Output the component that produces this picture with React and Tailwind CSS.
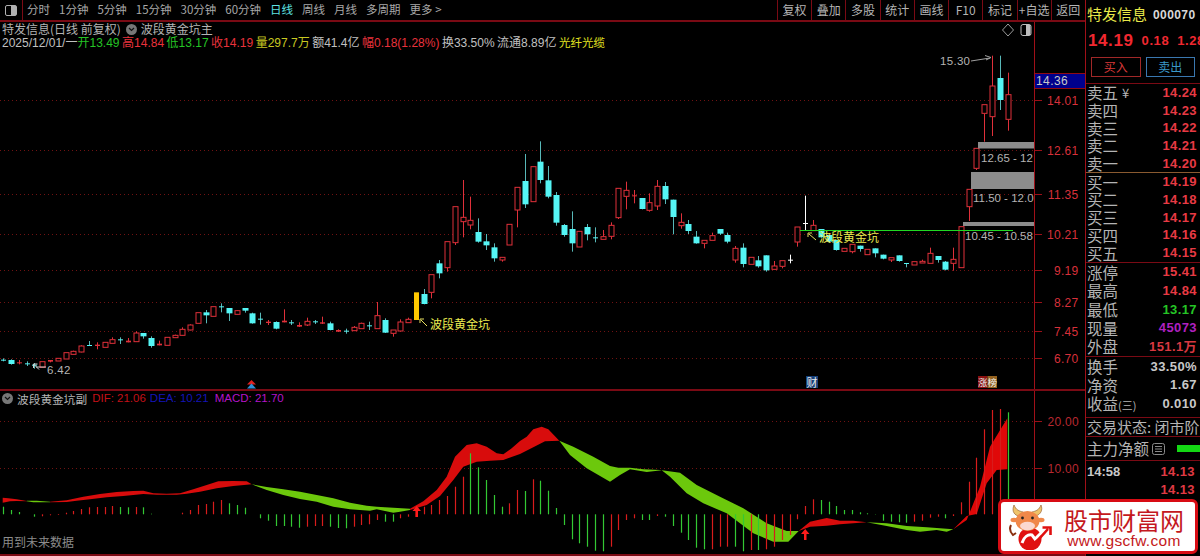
const FONT = '"Liberation Sans","Noto Sans CJK SC",sans-serif';
const CJK = '"Noto Sans CJK SC","Liberation Sans",sans-serif';
const X = (i) => 3.3 + 7.785 * i;
const RED = '#e0303a';
const CYAN = '#55f5f5';

const a = [
 ['C',269,271,265,274],['c',270,282,268,284],['R',277,280,270,283],['C',280,283,274,288],['C',284,287,279,296],
 ['r',275,292,275,292],['R',270,275,270,277],['r',265,273,265,273],['r',248,267,248,267],['r',244,253,242,254],
 ['r',228,246,226,247],['C',225,227,213,227],['R',224,228,217,238],['r',217,232,217,232],['r',209,220,202,220],
 ['C',208,211,202,222],['R',212,217,204,217],['r',189,215,184,216],['c',189,199,189,206],['c',204,228,199,233],
 ['R',221,226,212,226],['r',202,226,202,226],['r',196,203,194,204],['r',178,196,172,197],['r',165,180,163,181],
 ['r',128,160,128,160],['c',127,136,120,160],['r',110,139,110,139],['C',109,111,100,127],['c',114,130,114,153],
 ['r',122,133,120,134],['c',114,122,114,128],['c',130,160,128,161],['C',146,148,128,164],['R',155,159,150,165],
 ['c',156,176,154,178],['R',152,157,118,157],['C',157,160,150,165],['R',165,170,157,171],['r',154,165,143,168],
 ['C',154,157,150,162],['R',157,161,140,162],['c',160,180,155,181],['R',180,185,178,186],['C',182,185,176,191],
 ['r',172,182,168,183],['r',160,176,158,177],['C',166,168,155,180],['r',137,176,96,177],['c',150,188,145,189],
 ['r',180,190,180,200],['r',156,183,148,184],['r',148,158,143,159],['y',67,150,67,150],['c',72,102,57,103],
 ['r',14,67,14,85],
].map((c) => [c[0], ...c.slice(1).map((v) => 270 + v / 3)]);
const b = [
 ['c',400,430,390,445],['r',335,413,335,425],['r',230,338,230,345],['r',262,275,150,322],['r',271,285,200,298],
 ['c',306,335,265,338],['c',334,346,312,360],['c',352,385,340,395],['r',382,390,382,395],['r',283,345,283,345],
 ['r',172,240,172,292],['c',153,223,72,234],['r',110,215,110,215],['c',95,150,34,160],['c',151,200,108,205],
 ['c',195,278,186,287],['c',285,315,282,320],['c',297,340,244,365],['r',304,351,304,351],['c',291,313,282,331],
 ['C',322,325,292,337],['r',320,328,300,328],['r',286,319,277,328],['r',175,263,175,267],['r',181,199,155,238],
 ['R',196,199,180,220],['c',204,237,204,238],['r',218,241,190,245],['r',169,228,150,240],['c',168,208,156,222],
 ['c',209,261,209,313],['r',277,287,250,296],['c',282,303,270,312],
].map((c) => [c[0], ...c.slice(1).map((v) => 130 + v / 3)]);
const d = [
 ['c',170,190,153,191],['r',181,190,181,205],['r',167,181,158,181],['c',147,161,147,165],['c',165,185,158,190],
 ['r',205,240,198,248],['c',203,252,190,262],['r',232,253,232,253],['c',241,259,228,263],['c',226,271,226,275],
 ['r',258,268,243,268],['r',242,259,242,265],['w',239,241,224,250],['r',141,186,141,200],['w',129,131,47,150],
 ['r',136,152,120,152],['c',147,172,147,173],['c',165,185,165,186],['c',180,210,180,212],['r',205,214,205,214],
 ['r',193,215,193,220],['c',197,207,197,215],['r',208,224,208,224],['c',205,220,205,232],['c',224,236,224,238],
 ['r',233,240,233,246],['c',226,243,226,245],['C',249,251,249,262],['r',245,255,245,255],['r',244,249,239,249],
 ['r',220,250,203,250],['c',228,240,228,248],['c',245,269,243,271],['r',238,250,203,272],['r',140,263,140,263],
].map((c) => [c[0], ...c.slice(1).map((v) => 180 + v / 3)]);
const e = [
 ['r',448,500,448,543],['r',325,385,325,390],['r',194,220,194,305],['r',138,230,47,288],['c',114,180,47,210],['r',164,238,98,272],
].map((c) => [c[0], ...c.slice(1).map((v) => 40 + v / 3)]);
const candles = [...a, ...b, ...d, ...e];

const mainGrid = [100, 150, 194, 234, 270, 302, 331, 358];
const mainAxis = [['14.01',100],['12.61',150],['11.35',194],['10.21',234],['9.19',270],['8.27',302],['7.45',331],['6.70',358]];

function Candle({ c, i }) {
  const [t, top, bot, hi, lo] = c;
  const x = Math.round(X(i)) + 0.5;
  const w = 6;
  const col = t === 'r' || t === 'R' ? RED : t === 'c' || t === 'C' ? CYAN : t === 'w' ? '#ffffff' : '#ffcc00';
  const wick = t === 'c' || t === 'C' ? '#58b8b8' : col;
  if (t === 'C' || t === 'R' || t === 'w') {
    return (
      <g>
        <line x1={x} x2={x} y1={hi} y2={lo} stroke={wick} />
        <rect x={x - 2.5} y={top} width={5} height={Math.max(bot - top, 1)} fill={col} />
      </g>
    );
  }
  if (t === 'y') return <rect x={x - 2.5} y={top} width={5} height={bot - top} fill="#ffc800" />;
  if (t === 'c') {
    return (
      <g>
        <line x1={x} x2={x} y1={hi} y2={lo} stroke={wick} />
        <rect x={x - 3} y={top} width={w} height={bot - top} fill={col} />
      </g>
    );
  }
  return (
    <g>
      <line x1={x} x2={x} y1={hi} y2={top} stroke={RED} />
      <line x1={x} x2={x} y1={bot} y2={lo} stroke={RED} />
      <rect x={x - 2.5} y={top} width={5} height={bot - top} fill="#000" stroke={RED} />
    </g>
  );
}

function MainChart() {
  return (
    <svg className="absolute left-0 overflow-hidden" width="1034" height="390" viewBox="0 0 1034 390" style={{ top: -22 }}>
      {mainGrid.map((y) => (
        <line key={y} x1="0" x2="1034" y1={y + 0.5} y2={y + 0.5} stroke="#701212" strokeDasharray="1 3" />
      ))}
      {candles.map((c, i) => <Candle key={i} c={c} i={i} />)}
      <rect x="978" y="142" width="56" height="6.5" fill="#8c8c8c" />
      <rect x="971" y="172" width="63" height="17" fill="#8c8c8c" />
      <rect x="963" y="222" width="71" height="4" fill="#8c8c8c" />
      <line x1="800" x2="1013" y1="230.5" y2="230.5" stroke="#22d822" />
      <g fill="#b4b4b4" fontFamily={FONT} fontSize="11.5">
        <text x="981" y="162">12.65 - 12</text>
        <text x="973" y="202">11.50 - 12.0</text>
        <text x="965" y="239.5">10.45 - 10.58</text>
        <text x="47" y="373.5" letterSpacing="0.3">6.42</text>
        <text x="940" y="65" letterSpacing="0.3">15.30</text>
      </g>
      <path d="M971 61 L990 58 M985 55.5 L991 57.5 L986 60" fill="none" stroke="#a0a0a0" />
      <path d="M46 367 H36 M33.5 364 L39 369.5 M33.5 364 h4 M33.5 364 v4" fill="none" stroke="#d0d0d0" />
      <path d="M421 320 L427 326 M420 319 h4 M420 319 v4" fill="none" stroke="#e8e060" />
      <path d="M809 234 L816 240 M808 233 h4 M808 233 v4" fill="none" stroke="#e8e060" />
      <g fill="#ecec50" fontFamily={CJK} fontSize="12">
        <text x="430" y="329">波段黄金坑</text>
        <text x="819" y="242">波段黄金坑</text>
      </g>
      <path d="M251.5 380 L256 384.5 H247 Z" fill="#e02020" />
      <path d="M251.5 383.5 L256 388.5 H247 Z" fill="#2f8fd8" />
      <rect x="806" y="376" width="12" height="12" fill="#17417a" />
      <text x="806.5" y="386.5" fill="#e8e8e8" fontSize="11" fontFamily={CJK}>财</text>
      <rect x="978" y="376" width="9.5" height="12" fill="#8a1010" />
      <rect x="987.5" y="376" width="9.5" height="12" fill="#94621f" />
      <text x="978" y="386" fill="#e8e8e8" fontSize="9.5" fontFamily={CJK}>涨</text>
      <text x="987.5" y="386" fill="#f0f0f0" fontSize="9.5" fontFamily={CJK}>榜</text>
      <path d="M1008 24 L1013.5 30 L1008 36 L1002.5 30 Z" fill="none" stroke="#9a9a9a" />
      <rect x="1021" y="24.5" width="10" height="11" rx="2" fill="none" stroke="#bcbcbc" />
      <rect x="1026" y="25" width="4.5" height="10" fill="#bcbcbc" />
    </svg>
  );
}

const seg = [
  ['#d80c0c', [[8,323],[25,325],[50,328],[80,333]], [[8,338],[30,334],[50,333],[80,334]]],
  ['#6cc80c', [[80,332],[110,332],[150,335]], [[80,334],[100,337],[150,337]]],
  ['#d80c0c', [[150,335],[200,331],[250,320],[300,312],[350,306],[400,303],[430,302],[460,310],[500,311],[540,310],[580,298],[620,285],[655,274],[700,273],[740,274],[755,283]], [[150,337],[200,336],[230,332],[270,328],[320,322],[370,318],[430,312],[470,314],[530,314],[560,311],[600,305],[650,295],[700,288],[740,284],[755,283]]],
  ['#6cc80c', [[755,283],[800,291],[850,298],[900,305],[950,315],[1000,325],[1050,338],[1100,347],[1130,350],[1180,353],[1230,356]], [[755,283],[800,300],[850,315],[900,327],[950,335],[1000,350],[1050,358],[1110,362],[1130,358],[1180,368],[1200,365],[1230,360]]],
  ['#d80c0c', [[1230,356],[1270,334],[1310,300],[1340,260],[1365,200],[1400,165],[1430,160],[1460,170],[1490,190],[1510,193],[1535,175],[1560,153],[1580,140],[1600,118],[1625,110],[1645,118],[1678,152]], [[1230,360],[1280,345],[1320,318],[1360,270],[1390,230],[1430,215],[1470,212],[1510,210],[1560,192],[1600,172],[1635,154],[1678,152]]],
  ['#6cc80c', [[1678,152],[1720,170],[1780,200],[1830,228],[1855,233],[1890,233],[1930,238],[1980,240],[2040,248],[2090,285],[2160,320],[2230,355],[2300,400],[2360,423],[2396,423]], [[1678,152],[1710,195],[1760,235],[1830,275],[1860,255],[1890,238],[1940,246],[1985,241],[2010,260],[2060,310],[2110,340],[2180,370],[2260,430],[2320,455],[2365,455],[2396,423]]],
  ['#d80c0c', [[2396,423],[2430,395],[2480,384],[2520,392],[2560,392],[2600,397]], [[2396,423],[2430,410],[2480,407],[2520,403],[2600,397]]],
  ['#6cc80c', [[2600,397],[2660,400],[2720,408],[2780,412],[2860,418]], [[2600,397],[2660,408],[2720,420],[2760,425],[2810,420],[2840,425],[2860,418]]],
  ['#e00808', [[2860,418],[2900,390],[2940,290],[2970,170],[3022,85]], [[2860,418],[2900,378],[2930,372],[2960,280],[2990,240],[3022,238]]],
];

const bars = [
 ['g',350],['g',360],['g',366],null,['g',380],['r',379],['r',376],['r',375],['r',368],['r',363],['r',357],['r',352],['r',351],['r',351],['r',348],
 ['g',351],['g',352],['r',351],['g',352],['g',371],['g',373],['g',373],['r',373],['r',368],['r',360],['r',345],['r',342],['r',335],['r',330],
 ['g',340],['g',345],['g',353],null,['g',385],['g',392],['g',408],['g',408],['g',410],['g',413],['r',410],['r',408],['r',408],['g',410],['g',414],['g',415],
 ['r',410],['r',405],['r',403],['r',390],['g',395],['g',395],['r',385],['r',380],['r',380],['r',350],['r',345],['r',330],['r',318],['r',290],['r',260],
 ['g',190],['g',232],['g',270],['g',315],['g',350],['r',340],['r',300],['g',303],['r',268],['g',272],['g',302],['g',354],
 ['g',405],['g',448],['g',460],['g',470],['g',482],['g',484],['r',470],['r',420],['r',390],['r',385],['g',390],['g',390],['r',378],['g',380],['g',408],['g',428],['g',450],['g',473],['g',478],['r',478],['r',470],['r',470],['g',470],['g',484],['r',480],['g',480],['r',478],['r',470],['r',450],['r',435],['r',388],
 ['r',348],['r',328],['g',330],['g',335],['g',348],['g',360],['g',360],['g',367],['g',370],['g',372],['g',392],['g',395],['g',397],['g',398],['r',395],['r',392],['r',383],['r',380],['g',385],['r',378],
 ['r',337],['r',275],['r',203],['r',118],['r',60],['r',57],['g',67],
];

function SubChart() {
  const toY = (v) => (v / 3).toFixed(1);
  return (
    <svg className="absolute left-0" style={{ top: -1 }} width="1034" height="164" viewBox="0 0 1034 164">
      {[31, 78].map((y) => (
        <line key={y} x1="0" x2="1034" y1={y + 0.5} y2={y + 0.5} stroke="#701212" strokeDasharray="1 3" />
      ))}
      {seg.map(([col, top, bot], i) => (
        <polygon key={i} fill={col} points={[...top, ...[...bot].reverse()].map(([x, y]) => `${(x / 3).toFixed(1)},${toY(y)}`).join(' ')} />
      ))}
      {bars.map((v, i) => {
        if (!v) return null;
        const x = Math.round(X(i)) + 0.5;
        return <line key={i} x1={x} x2={x} y1={124.3} y2={toY(v[1])} stroke={v[0] === 'g' ? '#33c833' : '#d81c1c'} strokeWidth="1.2" />;
      })}
      <path d="M416.7 116 L421 121 H418 V127 H415.4 V121 H412.5 Z" fill="#ff1c1c" />
      <path d="M805.2 139 L809.5 144 H806.5 V150 H804 V144 H801 Z" fill="#ff1c1c" />
    </svg>
  );
}

function ToolTab({ children, active }) {
  return <span className={active ? 'text-[#5fe3e3]' : 'text-[#a8a8a8]'}>{children}</span>;
}

function ToolBtn({ children }) {
  return <span className="flex-1 flex items-center justify-center border-l border-[#7a0a14]">{children}</span>;
}

function Quote({ label, price, extra }) {
  return (
    <div className="flex items-center justify-between pl-[1px] pr-[3px] h-[17.7px]">
      <span className="flex items-center text-[15.5px] leading-[17px] text-[#b4b4b4] whitespace-nowrap" style={{ fontFamily: CJK }}>
        {label}{extra}
      </span>
      <span className="text-[13px] leading-[14px] font-bold text-[#e83a44] tracking-[0.4px]">{price}</span>
    </div>
  );
}

function Stat({ label, value, cls }) {
  return (
    <div className="flex items-center justify-between pl-[1px] pr-[3px] h-[18.7px]">
      <span className="text-[15.5px] leading-[17px] text-[#b4b4b4] whitespace-nowrap" style={{ fontFamily: CJK }}>{label}</span>
      <span className={`text-[13px] leading-[14px] font-bold tracking-[0.4px] whitespace-nowrap ${cls}`}>{value}</span>
    </div>
  );
}

const Hr = ({ c = 'border-[#7a0a14]' }) => <div className={`border-t ${c}`} />;

export default function App() {
  return (
    <div className="relative w-[1200px] h-[556px] overflow-hidden bg-black flex text-[12px] text-[#b4b4b4]" style={{ fontFamily: FONT }}>
      <div className="w-[1085px] flex flex-col">
        <div className="h-[22px] flex border-b-2 border-[#7a0a14]">
          <div className="w-[23px] flex items-center justify-center border-r border-[#7a0a14]">
            <div className="w-[12px] h-[11px] rounded-[2px] border border-[#b0b0b0] flex justify-end">
              <div className="w-[5px] bg-[#b0b0b0]" />
            </div>
          </div>
          <div className="flex-1 flex items-center gap-[9px] pl-[4px] text-[11.5px]" style={{ fontFamily: CJK }}>
            <ToolTab>分时</ToolTab><ToolTab>1分钟</ToolTab><ToolTab>5分钟</ToolTab><ToolTab>15分钟</ToolTab>
            <ToolTab>30分钟</ToolTab><ToolTab>60分钟</ToolTab><ToolTab active>日线</ToolTab><ToolTab>周线</ToolTab>
            <ToolTab>月线</ToolTab><ToolTab>多周期</ToolTab><ToolTab>更多 &gt;</ToolTab>
          </div>
          <div className="w-[308px] flex" style={{ fontFamily: CJK }}>
            <ToolBtn>复权</ToolBtn><ToolBtn>叠加</ToolBtn><ToolBtn>多股</ToolBtn><ToolBtn>统计</ToolBtn><ToolBtn>画线</ToolBtn>
            <ToolBtn>F10</ToolBtn><ToolBtn>标记</ToolBtn><ToolBtn>+自选</ToolBtn><ToolBtn>返回</ToolBtn>
          </div>
        </div>

        <div className="h-[369px] flex border-b-2 border-[#7a0a14]">
          <div className="relative w-[1034px]">
            <MainChart />
            <div className="relative pl-[2px]" style={{ fontFamily: CJK }}>
              <div className="h-[14px] leading-[14px] flex items-center whitespace-nowrap">
                特发信息(日线 前复权)
                <span className="w-[11px] h-[11px] rounded-full bg-[#777] ml-[5px] mr-[4px] flex items-center justify-center">
                  <svg width="7" height="5" viewBox="0 0 7 5"><path d="M1 1 L3.5 3.5 L6 1" fill="none" stroke="#111" strokeWidth="1.2" /></svg>
                </span>
                波段黄金坑主
              </div>
              <div className="h-[14px] leading-[14px] flex whitespace-nowrap gap-[2.5px] text-[#c0c0c0]" style={{ fontFamily: FONT }}>
                <span className="w-[73px]">2025/12/01/一</span>
                <span className="text-[#25c425]">开13.49</span>
                <span className="text-[#e8323c]">高14.84</span>
                <span className="text-[#25c425]">低13.17</span>
                <span className="text-[#e8323c]">收14.19</span>
                <span className="text-[#c8c820]">量297.7万</span>
                <span>额41.4亿</span>
                <span className="text-[#e8323c]">幅0.18(1.28%)</span>
                <span>换33.50%</span>
                <span>流通8.89亿</span>
                <span className="text-[#e0e020] text-[11.5px]">光纤光缆</span>
              </div>
            </div>
          </div>
          <div className="relative w-[51px] border-l border-[#a01018]">
            <svg className="absolute left-0" style={{ top: -22 }} width="50" height="390" viewBox="0 0 50 390">
              {mainAxis.map(([t, y]) => (
                <g key={t}>
                  <line x1="0" x2="7" y1={y + 0.5} y2={y + 0.5} stroke="#9a1018" />
                  <text x="43.5" y={y + 4.5} textAnchor="end" fill="#d8303a" fontFamily={FONT} fontSize="12" letterSpacing="0.3">{t}</text>
                </g>
              ))}
            </svg>
            <div className="absolute left-0 top-[51px] w-[50px] h-[16px] bg-[#00008c] border-t border-[#900a14] border-b text-[12px] leading-[14px] pl-[1px] tracking-[0.4px] text-[#c8c8c8]">14.36</div>
          </div>
        </div>

        <div className="flex-1 flex">
          <div className="relative w-[1034px]">
            <SubChart />
            <div className="relative pl-[2px] h-[15px] flex items-center whitespace-nowrap" style={{ fontFamily: CJK }}>
              <span className="w-[11px] h-[11px] rounded-full bg-[#777] mr-[4px] flex items-center justify-center">
                <svg width="7" height="5" viewBox="0 0 7 5"><path d="M1 1 L3.5 3.5 L6 1" fill="none" stroke="#111" strokeWidth="1.2" /></svg>
              </span>
              <span className="text-[11.7px]">波段黄金坑副</span>
              <span className="text-[#c41018] ml-[5px] text-[11.5px]" style={{ fontFamily: FONT }}>DIF: 21.06</span>
              <span className="text-[#1414b8] ml-[4px] text-[11.5px]" style={{ fontFamily: FONT }}>DEA: 10.21</span>
              <span className="text-[#b414c8] ml-[6px] text-[11.5px]" style={{ fontFamily: FONT }}>MACD: 21.70</span>
            </div>
            <div className="absolute left-[2px] bottom-[3px] text-[#8c8c8c] text-[12px]" style={{ fontFamily: CJK }}>用到未来数据</div>
          </div>
          <div className="relative w-[51px] border-l border-[#a01018]">
            <svg className="absolute left-0" style={{ top: -1 }} width="50" height="164" viewBox="0 0 50 164">
              {[['20.00',31],['10.00',78]].map(([t, y]) => (
                <g key={t}>
                  <line x1="0" x2="7" y1={y + 0.5} y2={y + 0.5} stroke="#9a1018" />
                  <text x="44" y={y + 4.5} textAnchor="end" fill="#b82830" fontFamily={FONT} fontSize="12" letterSpacing="0.3">{t}</text>
                </g>
              ))}
            </svg>
          </div>
        </div>
        <div className="h-[2px] shrink-0 bg-[#7a0a14]" />
      </div>

      {/* right panel */}
      <div className="w-[115px] border-l border-[#a01018] flex flex-col overflow-hidden">
        <div className="h-[29px] flex items-center whitespace-nowrap pl-[1px]">
          <span className="text-[15px] text-[#e8e84a]" style={{ fontFamily: CJK }}>特发信息</span>
          <span className="ml-[6px] font-bold text-[12px] text-[#d8d8d8] tracking-[0.4px]">000070</span>
        </div>
        <div className="h-[23px] flex items-center whitespace-nowrap pl-[2px] text-[#f02830] font-bold">
          <span className="text-[17px] tracking-[0.6px]">14.19</span>
          <span className="ml-[8px] text-[13px] tracking-[0.6px]">0.18</span>
          <span className="ml-[8px] text-[13px] tracking-[0.6px]">1.28%</span>
        </div>
        <div className="h-[25px] flex gap-[5px] px-[5px] pt-[5px]" style={{ fontFamily: CJK }}>
          <div className="w-[50px] border border-[#a02828] flex items-center justify-center text-[#d83838]">买入</div>
          <div className="w-[50px] border border-[#3a78b0] flex items-center justify-center text-[#3a98c8]">卖出</div>
        </div>
        <div className="mt-[6px]"><Hr /></div>
        <Quote label="卖五" price="14.24" extra={<span className="ml-[4px] text-[13px] leading-none">¥</span>} />
        <Quote label="卖四" price="14.23" />
        <Quote label="卖三" price="14.22" />
        <Quote label="卖二" price="14.21" />
        <Quote label="卖一" price="14.20" />
        <Hr c="border-[#8a5a30]" />
        <Quote label="买一" price="14.19" />
        <Quote label="买二" price="14.18" />
        <Quote label="买三" price="14.17" />
        <Quote label="买四" price="14.16" />
        <Quote label="买五" price="14.15" />
        <Hr />
        <Stat label="涨停" value="15.41" cls="text-[#e83a44]" />
        <Stat label="最高" value="14.84" cls="text-[#e83a44]" />
        <Stat label="最低" value="13.17" cls="text-[#25c425]" />
        <Stat label="现量" value="45073" cls="text-[#b020c0]" />
        <Stat label="外盘" value="151.1万" cls="text-[#d83840]" />
        <Hr />
        <Stat label="换手" value="33.50%" cls="text-[#c8c8c8]" />
        <Stat label="净资" value="1.67" cls="text-[#c8c8c8]" />
        <Stat label={<>收益<span className="text-[11px]">(三)</span></>} value="0.010" cls="text-[#c8c8c8]" />
        <div className="mt-[4px]"><Hr /></div>
        <div className="h-[18px] pl-[1px] flex items-center text-[15px] whitespace-nowrap" style={{ fontFamily: CJK }}>交易状态: 闭市阶</div>
        <Hr />
        <div className="h-[23px] pl-[1px] flex items-center whitespace-nowrap" style={{ fontFamily: CJK }}>
          <span className="text-[15.5px]">主力净额</span>
          <svg className="ml-[3px] shrink-0" width="13" height="12" viewBox="0 0 13 12">
            <rect x="0.5" y="0.5" width="12" height="11" rx="2" fill="none" stroke="#8a8a8a" />
            <path d="M3 3.5h7M3 6h7M3 8.5h7" stroke="#8a8a8a" />
          </svg>
          <span className="ml-[12px] w-[30px] h-[7px] bg-[#14d814] shrink-0" />
        </div>
        <Hr />
        <div className="flex items-center justify-between h-[18px] mt-[1px] pl-[1px] pr-[5px] font-bold">
          <span className="text-[#c8c8c8] text-[13px]">14:58</span>
          <span className="text-[#e03a44] text-[13px] tracking-[0.4px]">14.13</span>
        </div>
        <div className="flex items-center justify-end h-[18px] pr-[5px] font-bold">
          <span className="text-[#e03a44] text-[13px] tracking-[0.4px]">14.13</span>
        </div>
      </div>

      {/* watermark logo */}
      <div className="absolute left-[998px] top-[499px] w-[200px] h-[55px] rounded-[6px] bg-white border-[3px] border-[#d80c14] flex items-center pl-[7px]">
        <svg className="shrink-0" width="46" height="46" viewBox="0 0 46 46">
          <path d="M3 21 C1 25 2 28 5 31 L8 29" fill="none" stroke="#8a3010" strokeWidth="2" />
          <path d="M10 12 C5 10 4 6 6 1 C8 6 11 7 15 8 Z" fill="#efc36a" stroke="#8a5020" strokeWidth="0.6" />
          <path d="M28 12 C33 10 35 6 33 1 C31 6 28 7 24 8 Z" fill="#efc36a" stroke="#8a5020" strokeWidth="0.6" />
          <circle cx="22" cy="35" r="11.5" fill="#e01010" />
          <ellipse cx="6" cy="16" rx="3.5" ry="2.2" fill="#f0884a" />
          <ellipse cx="33" cy="16" rx="3.5" ry="2.2" fill="#f0884a" />
          <ellipse cx="19.5" cy="17" rx="12" ry="10" fill="#f0884a" />
          <circle cx="14.5" cy="14" r="1.4" fill="#222" />
          <circle cx="24.5" cy="14" r="1.4" fill="#222" />
          <ellipse cx="19.5" cy="22" rx="7.5" ry="4.2" fill="#fbd8d0" />
          <path d="M14 39 C16 33 20 30 24 31 L27 35 L37 25" fill="none" stroke="#ffffff" strokeWidth="3" />
          <path d="M22 43 L30 36 L40 25 M34.5 23.5 H42.5 V31" fill="none" stroke="#e01010" strokeWidth="2.6" />
        </svg>
        <div className="ml-[10px] flex flex-col items-center" style={{ fontFamily: CJK }}>
          <span className="text-[24px] leading-[27px] text-[#c41820]">股市财富网</span>
          <span className="text-[15.5px] leading-[15px] text-[#c41820] tracking-[0.3px]" style={{ fontFamily: '"Liberation Sans",sans-serif' }}>www.gscfw.com</span>
        </div>
      </div>
    </div>
  );
}
